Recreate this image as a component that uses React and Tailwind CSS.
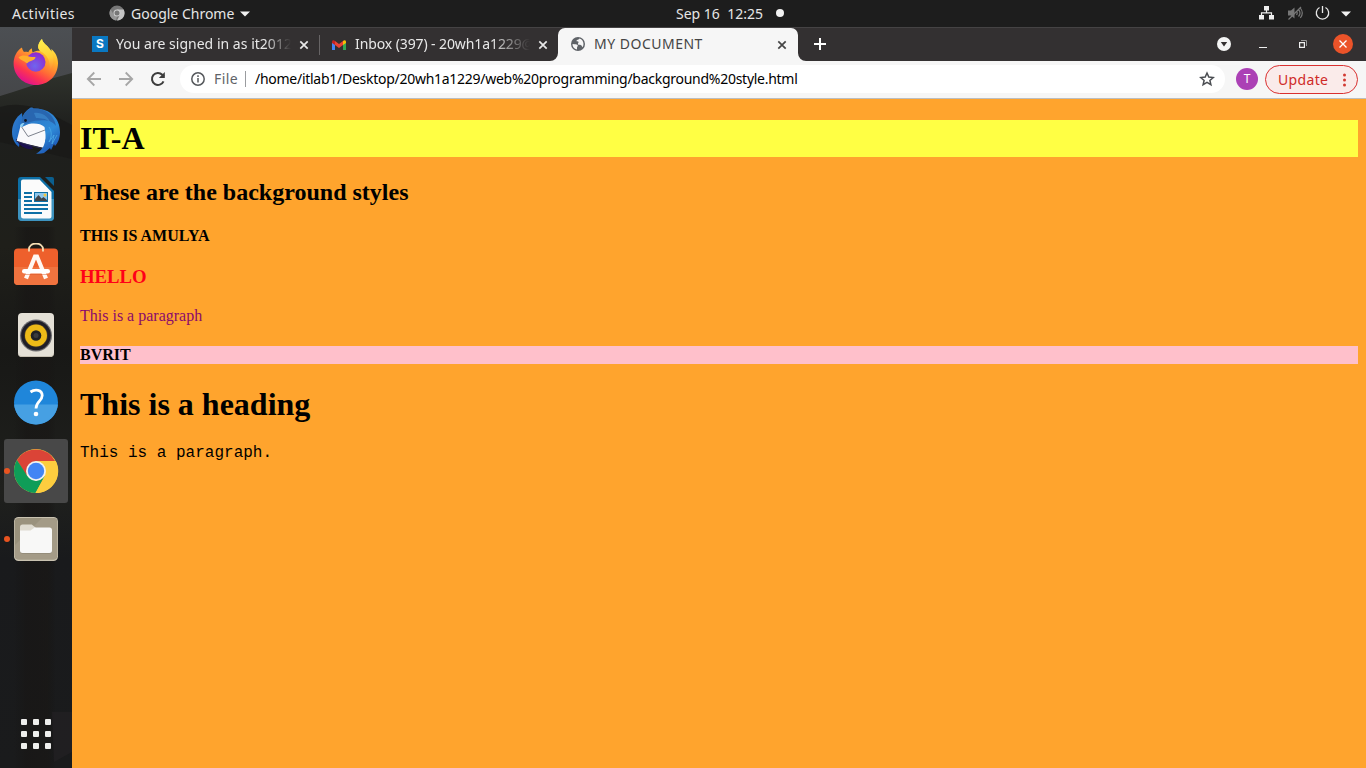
import React from "react";

function Firefox() {
  return (
    <svg viewBox="0 0 48 48" className="size-12">
      <defs>
        <linearGradient id="ffBody" x1="0.85" y1="0.1" x2="0.35" y2="0.97">
          <stop offset="0" stopColor="#fff44f" />
          <stop offset="0.3" stopColor="#ffb52a" />
          <stop offset="0.62" stopColor="#ff6a36" />
          <stop offset="0.8" stopColor="#fd3550" />
          <stop offset="1" stopColor="#e31587" />
        </linearGradient>
        <linearGradient id="ffTail" x1="0.5" y1="0" x2="0.6" y2="1">
          <stop offset="0" stopColor="#fff04e" />
          <stop offset="0.6" stopColor="#ffcf36" />
          <stop offset="1" stopColor="#ff9640" stopOpacity="0.3" />
        </linearGradient>
        <radialGradient id="ffGlobe" cx="0.45" cy="0.7" r="0.65">
          <stop offset="0" stopColor="#6f66ee" />
          <stop offset="1" stopColor="#8f2bd0" />
        </radialGradient>
      </defs>
      <path d="M10 8.500c.3 2 1 3.300 2 4.500 1.500-.3 3-.2 4.300.2C17 11.500 18.500 10 20 9.300c-.2 1.800.2 3.200.8 4.200 2-1.300 5-2 8-1.500C24.500 9.500 26 4 30 0c.6 4 4.800 6 7.300 9.500.8 1 1.500 2 2 3 .2-1 .1-1.800 0-2.500 4 3 6.700 8.500 6.700 14C46 36.500 36.500 46 24 46S1.600 36.500 1.600 24.500C1.600 18.500 4.500 11.500 10 8.500z" fill="url(#ffBody)" />
      <path d="M30 0c.6 4 4.800 6 7.300 9.500 5 6.500 6 15 .5 21.500 1-9-3-15.500-9-18.500C24.500 9.500 26 4 30 0z" fill="url(#ffTail)" />
      <circle cx="23.800" cy="23" r="9.700" fill="url(#ffGlobe)" />
      <path d="M6.500 18.500c2.500-2.500 7-2.300 9.500-1.300 2.500.8 5 .8 7.500.8.2 2-2.200 3.200-4.600 4-1.800.6-2.900 1.500-3.900 2.400C12 22 8.500 21 6.500 18.500z" fill="#ffae2c" />
    </svg>
  );
}

function Thunderbird() {
  return (
    <svg viewBox="0 0 48 48" className="size-12">
      <defs>
        <linearGradient id="tbBody" x1="0" y1="0" x2="1" y2="1">
          <stop offset="0" stopColor="#3b80cc" />
          <stop offset="0.5" stopColor="#2371c8" />
          <stop offset="1" stopColor="#1a52b5" />
        </linearGradient>
        <linearGradient id="tbWing" x1="0.2" y1="0" x2="0.8" y2="1">
          <stop offset="0" stopColor="#2a73c4" />
          <stop offset="0.6" stopColor="#2f8bd8" />
          <stop offset="1" stopColor="#1b50b0" />
        </linearGradient>
      </defs>
      <path d="M10 6C4 10 0 17 0 25c0 7 3 12 7 15l4-24z" fill="url(#tbBody)" />
      <path d="M4 32c3 7 10 11 17 10l-4-8z" fill="#1b1050" />
      <path d="M9 17l4-2h22v12l-3 14L4.500 34.500z" fill="#f9f9fb" />
      <path d="M9 19l7 10.500L33 23" fill="none" stroke="#7d828d" strokeWidth="1" />
      <path d="M4 34l14 4.500 13 3" fill="none" stroke="#2b2b50" strokeWidth="1" />
      <path d="M18 1c2-1 3.500 0 3.500 1C36 .500 48 10 48 25c0 6-2 11-5 14l-1-2-3 6-1-2-6 5c-1 .5-4 .8-8 .8C31 43 33 37 33.500 31c.3-4-.5-8-1-11-3-3-8-4-13-3.500-4 .5-6.500 2-9.500 3.500C7 18 9.500 6 18 1z" fill="url(#tbWing)" />
      <path d="M18 1.500C31 0 42 7 44 19c-5-6-11-6-16-5.500-7 0-13 2-18 5C8 15 11 5 18 1.500z" fill="#2866b0" />
      <path d="M22 6c7-1 14 3 16 9-5-4-9-3.500-14-4" fill="#3f8dd2" opacity=".6" />
      <path d="M37 20c3 5 3 9 0 15l5-7-2 9 5-9" fill="none" stroke="#4fb0e8" strokeWidth="1" opacity=".7" />
      <path d="M8 20c0-3 2-4.500 4.500-4l-2.500 4z" fill="#8fd2f4" />
      <circle cx="13.500" cy="13.500" r="1.400" fill="#10151f" />
    </svg>
  );
}

function Writer() {
  return (
    <svg viewBox="0 0 48 48" className="size-12">
      <path d="M9 2h19l14 14v26a4 4 0 0 1-4 4H10a4 4 0 0 1-4-4V5a3 3 0 0 1 3-3z" fill="#0d6fa6" />
      <path d="M6 24h36v18a4 4 0 0 1-4 4H10a4 4 0 0 1-4-4z" fill="#3d93bf" />
      <path d="M33 2h7a2 2 0 0 1 2 2v7z" fill="#0b5f8f" />
      <path d="M11 4.500h16.500L39.500 17v24.500a2 2 0 0 1-2 2h-26a2.500 2.500 0 0 1-2.500-2.500V6.500a2 2 0 0 1 2-2z" fill="#fbfbfb" />
      <path d="M12 18h8M12 22h8M12 26h8M12 30h24M12 34h24M12 38h18" stroke="#0d6fa6" strokeWidth="2" />
      <path d="M22 17h14v10H22z" fill="#0d6fa6" />
      <path d="M23 18h12v8H23z" fill="#8fc6ec" />
      <circle cx="33" cy="20" r="1.500" fill="#f3c53d" />
      <path d="M23 26v-2l3.500-4 3 3.500 2-1.500 3.500 3v1z" fill="#414449" />
    </svg>
  );
}

function Software() {
  return (
    <svg viewBox="0 0 48 48" className="size-12">
      <rect x="2" y="5.500" width="44" height="36.500" rx="4" fill="#ee602c" />
      <path d="M2 24h44v14a4 4 0 0 1-4 4H6a4 4 0 0 1-4-4z" fill="#f0733f" />
      <path d="M17 8.500V6a7 5.500 0 0 1 14 0v2.500" fill="none" stroke="#f6dfb5" strokeWidth="1.800" />
      <path d="M14 35.500L23 13.500h2l9 22" fill="none" stroke="#fff8f3" strokeWidth="4.200" />
      <rect x="10" y="26" width="28" height="4.600" rx="2.300" fill="#fff" />
      <path d="M13 31.500h22" stroke="#d65527" strokeWidth="1" opacity=".45" />
    </svg>
  );
}

function Rhythmbox() {
  return (
    <svg viewBox="0 0 48 48" className="size-12">
      <rect x="6" y="2" width="36" height="44" rx="4" fill="#e4e0d6" />
      <path d="M6 41a4 4 0 0 0 4 5h28a4 4 0 0 0 4-5v1a4 4 0 0 1-4 3H10a4 4 0 0 1-4-3z" fill="#c6c0b2" />
      <circle cx="24" cy="24.500" r="16" fill="#6c6b6e" />
      <circle cx="24" cy="24.500" r="14.800" fill="#1f1e28" />
      <circle cx="24" cy="24.500" r="11.700" fill="#4a3d25" />
      <circle cx="24" cy="24.500" r="11" fill="#edba18" />
      <circle cx="24" cy="24.500" r="5.300" fill="#202224" />
      <circle cx="24" cy="24.500" r="2.500" fill="#3a3c3e" />
    </svg>
  );
}

function Help() {
  return (
    <svg viewBox="0 0 48 48" className="size-12">
      <circle cx="24" cy="23.500" r="22" fill="#1f86da" />
      <path d="M2.100 25.500h43.800a22 22 0 0 1-43.800 0z" fill="#46a0e3" />
      <path d="M18.500 13c2.500-1.800 5-2.200 7.500-1.700 3 .7 4.200 2.700 4.200 5.200 0 5.500-6.200 6-6.200 13" fill="none" stroke="#fff" strokeWidth="2.800" />
      <circle cx="24" cy="35" r="2.300" fill="#fff" />
    </svg>
  );
}

function Chrome() {
  return (
    <svg viewBox="0 0 48 48" className="size-12">
      <circle cx="24" cy="24" r="22" fill="#fdcd3f" />
      <path d="M4.950 13A22 22 0 0 1 43.050 14H24L14.500 29.500z" fill="#db4437" />
      <path d="M4.950 13A22 22 0 0 0 23.500 46L32.700 29 24 34 15.300 29z" fill="#0f9d58" />
      <path d="M24 14h19.800A22 22 0 0 1 23.500 46L33 29z" fill="#fdcd3f" />
      <circle cx="24" cy="24" r="10" fill="#f1f1f1" />
      <circle cx="24" cy="24" r="8.200" fill="#4285f4" />
    </svg>
  );
}

function Files() {
  return (
    <svg viewBox="0 0 48 48" className="size-12">
      <rect x="2" y="2" width="44" height="44" rx="4.500" fill="#c9c2b0" />
      <rect x="2.700" y="3" width="42.600" height="41.500" rx="4" fill="#9a927d" />
      <path d="M3 30L30 3h11a4 4 0 0 1 4 4v34a3.500 3.500 0 0 1-4 3.500H7a4 4 0 0 1-4-3.500z" fill="#a8a08c" opacity=".7" />
      <path d="M8 17v-5a2.500 2.500 0 0 1 2.500-2.500h9.300L24 13l-3 4z" fill="#dfdbd0" />
      <path d="M8 16.500h10.500l4-3.500H37.500a2.500 2.500 0 0 1 2.500 2.500V36a2.500 2.500 0 0 1-2.500 2.500h-27A2.500 2.500 0 0 1 8 36z" fill="#777060" opacity=".6" />
      <path d="M8 15.500h10.500l4-3H37.500A2.500 2.500 0 0 1 40 15v20.500a2.500 2.500 0 0 1-2.500 2.500h-27A2.500 2.500 0 0 1 8 35.500z" fill="#f8f8f7" />
    </svg>
  );
}

function CloseX({ className = "" }) {
  return (
    <svg viewBox="0 0 10 10" className={`size-[10px] shrink-0 ${className}`}>
      <path d="M1.300 1.300l7.400 7.400M8.700 1.300L1.300 8.700" stroke="currentColor" strokeWidth="1.700" />
    </svg>
  );
}

function TopBar() {
  return (
    <header className="flex h-[27px] shrink-0 items-center bg-[#1d1d1d] font-['Noto_Sans',sans-serif] text-[14px] leading-[27px] text-[#e6e6e6]">
      <div className="flex w-[676px] items-center pl-3">
        <span className="w-[97px] tracking-[0.47px] whitespace-nowrap">Activities</span>
        <svg viewBox="0 0 16 16" className="-mt-px size-4">
          <circle cx="8" cy="8" r="7.500" fill="#777" />
          <path d="M8 4.500h6.700A7.500 7.500 0 0 1 8 15.500L11 9.800z" fill="#c4c4c4" />
          <path d="M1.500 4.200L4.900 10 8 11.500 7 15.400A7.500 7.500 0 0 1 1.500 4.200z" fill="#969696" />
          <circle cx="8" cy="8" r="3.500" fill="#d0d0d0" />
          <circle cx="8" cy="8" r="2.500" fill="#777" />
        </svg>
        <span className="ml-[6px] w-[109px] whitespace-nowrap">Google Chrome</span>
        <svg viewBox="0 0 10 6" className="h-[6px] w-[10px]"><path d="M0 .500h10L5 5.500z" fill="#f2f2f2" /></svg>
      </div>
      <span className="-mt-px w-[100px] whitespace-pre">Sep 16  12:25</span>
      <span className="-mt-px size-2 rounded-full bg-[#f2f2f2]" />
      <div className="ml-auto flex items-center pr-[15px]">
        <svg viewBox="0 0 16 14" className="-mt-px h-[14px] w-4" fill="#eee">
          <path d="M6 0h5v4.500H6zM1 9h5v4.500H1zM11 9h5v4.500h-5z" />
          <path d="M8.500 4v3M3.500 10V6.800h10V10" fill="none" stroke="#eee" strokeWidth="1.200" />
        </svg>
        <svg viewBox="0 0 16 16" className="-mt-px ml-[13px] size-4" fill="none" stroke="#777" strokeWidth="1.200">
          <path d="M1 5.500h3l3.500-3v11L4 10.500H1z" fill="#777" stroke="none" />
          <path d="M9.500 6q1.500 2 0 4M11.500 4.500q3 3.500 0 7M13.300 3q4 5 0 10M1.500 14.500L14 2" />
        </svg>
        <svg viewBox="0 0 16 16" className="-mt-px ml-[11px] size-4" fill="none" stroke="#e8e8e8" strokeWidth="1.300">
          <path d="M5.500 2.500a6.200 6.200 0 1 0 6 0M8.500 1v7" />
        </svg>
        <svg viewBox="0 0 10 6" className="ml-[11px] h-[6px] w-[10px]"><path d="M0 .500h10L5 5.500z" fill="#f2f2f2" /></svg>
      </div>
    </header>
  );
}

const dockApps = [
  { id: "firefox", Icon: Firefox },
  { id: "thunderbird", Icon: Thunderbird },
  { id: "writer", Icon: Writer },
  { id: "software", Icon: Software },
  { id: "rhythmbox", Icon: Rhythmbox },
  { id: "help", Icon: Help },
  { id: "chrome", Icon: Chrome, running: true, active: true },
  { id: "files", Icon: Files, running: true },
];

function Dock() {
  return (
    <nav className="relative flex w-[72px] shrink-0 flex-col items-center overflow-hidden bg-[#191919] pt-1 pb-[19px]">
      <svg viewBox="0 0 72 741" preserveAspectRatio="none" className="absolute inset-0 h-full w-full">
        <defs>
          <linearGradient id="sky" x1="0" y1="0" x2="0" y2="1">
            <stop offset="0" stopColor="#4c4f53" />
            <stop offset="1" stopColor="#434446" />
          </linearGradient>
          <linearGradient id="ground" x1="0" y1="0" x2="0" y2="1">
            <stop offset="0" stopColor="#2f322c" />
            <stop offset="0.08" stopColor="#1e1f1d" />
            <stop offset="0.25" stopColor="#1f1f1a" />
            <stop offset="0.4" stopColor="#181816" />
            <stop offset="0.6" stopColor="#1f201d" />
            <stop offset="0.7" stopColor="#191a1c" />
            <stop offset="1" stopColor="#1a1b1c" />
          </linearGradient>
          <linearGradient id="trunk" x1="0" y1="0" x2="1" y2="0">
            <stop offset="0" stopColor="#161514" stopOpacity="0" />
            <stop offset="0.3" stopColor="#181615" stopOpacity=".7" />
            <stop offset="0.8" stopColor="#191715" stopOpacity=".7" />
            <stop offset="1" stopColor="#161514" stopOpacity="0" />
          </linearGradient>
        </defs>
        <path d="M0 0h72v90H0z" fill="url(#sky)" />
        <path d="M0 69Q30 60 50 52L72 46V741H0z" fill="url(#ground)" />
        <path d="M0 80q20-6 45 4l27 14v34L0 115z" fill="#181817" opacity=".7" />
        <path d="M14 200h42v541H14z" fill="url(#trunk)" />
        <path d="M52 685h20v40l-18 10z" fill="#242124" opacity=".7" />
      </svg>
      <div className="relative flex flex-col gap-1">
        {dockApps.map(({ id, Icon, running, active }) => (
          <div key={id} className={`relative flex size-16 items-center justify-center rounded-[3px] ${active ? "bg-[#484848]" : ""}`}>
            {running && <span className="absolute top-[29px] left-0 size-[6px] rounded-full bg-[#e95420]" />}
            <Icon />
          </div>
        ))}
      </div>
      <div className="relative mt-auto grid grid-cols-3 gap-[6px]">
        {Array.from({ length: 9 }, (_, i) => (
          <span key={i} className="size-[6px] rounded-[1px] bg-[#eeeeec]" />
        ))}
      </div>
    </nav>
  );
}

function TabStrip() {
  return (
    <div className="flex h-[34px] shrink-0 border-t border-[#454344] bg-[#333031] pl-2 text-[14px] text-[#e8e8e8]">
      <div className="flex w-[239px] items-center pl-3">
        <span className="-mt-px flex size-4 shrink-0 items-center justify-center bg-[#0a78c2] font-['Inter',sans-serif] text-[12px] leading-4 font-bold text-white">S</span>
        <span className="ml-2 w-[175px] mask-r-from-[85%] pb-[2px] tracking-[0.02px] whitespace-nowrap">You are signed in as it2012</span>
        <CloseX className="ml-2" />
      </div>
      <div className="flex w-[239px] items-center">
        <span className="h-5 w-px bg-[#676465]" />
        <svg viewBox="0 0 16 12" className="ml-[11px] h-3 w-4 shrink-0">
          <path d="M1 3v8h3V5z" fill="#4285f4" />
          <path d="M12 5v6h3V3z" fill="#34a853" />
          <path d="M4 2l4 3 4-3v4L8 9 4 6z" fill="#ea4335" />
          <path d="M1 3c0-2 1.800-2.300 3-1v4L1 4z" fill="#c5221f" />
          <path d="M15 3c0-2-1.800-2.300-3-1v4l3-2z" fill="#fbbc04" />
        </svg>
        <span className="ml-2 w-[175px] mask-r-from-[78%] pb-[2px] tracking-[-0.1px] whitespace-nowrap">Inbox (397) - 20wh1a1229@</span>
        <CloseX className="ml-2" />
      </div>
      <div className="relative flex w-60 items-center rounded-t-[7px] bg-[#f6f6f6] pl-3 text-[#454545]">
        <svg viewBox="0 0 8 8" className="absolute bottom-0 -left-2 size-2"><path d="M8 0v8H0a8 8 0 0 0 8-8z" fill="#f6f6f6" /></svg>
        <svg viewBox="0 0 8 8" className="absolute -right-2 bottom-0 size-2"><path d="M0 0v8h8a8 8 0 0 1-8-8z" fill="#f6f6f6" /></svg>
        <svg viewBox="0 0 16 16" className="-mt-px size-4 shrink-0">
          <circle cx="8" cy="8" r="7" fill="#5f6368" />
          <path d="M2.500 8l2 .2c1.500 0 3 0 3.300 1.200.2 1-.8 1.200-.8 2.200v1.800C4 13 2.300 10.500 2.500 8zM9.500 2.600c2.500.8 4 3 4 5.400 0 1.300-.3 2.300-1 3.200-.6-.5-.5-1.600-1.300-2-.8-.5-2.200.2-3-.8-.8-1.200.8-2 .3-2.700-.5-.6-2.200.2-2-1C6.700 3.500 9 4 9.500 2.600z" fill="#f6f6f6" />
        </svg>
        <span className="ml-2 w-[183px] pb-[2px] tracking-[0.5px] whitespace-nowrap">MY DOCUMENT</span>
        <CloseX />
      </div>
      <svg viewBox="0 0 12 12" className="mt-[10px] ml-4 size-3"><path d="M6 0v12M0 6h12" stroke="#fff" strokeWidth="2" /></svg>
      <div className="ml-auto flex items-center pr-[13px] pb-px">
        <svg viewBox="0 0 14 14" className="size-[14px]"><circle cx="7" cy="7" r="7" fill="#f5f5f5" /><path d="M3.800 5h6.400L7 9.500z" fill="#333031" /></svg>
        <span className="mt-[6px] ml-7 h-px w-2 bg-[#eee]" />
        <svg viewBox="0 0 8 8" className="ml-8 size-2" fill="none"><path d="M.600 2.600h4.800v4.800H.600z" stroke="#eee" strokeWidth="1.200" /><path d="M2 .500h5.500V6" stroke="#999" /></svg>
        <span className="ml-[26px] flex size-5 items-center justify-center rounded-full bg-[#eb5329]">
          <svg viewBox="0 0 8 8" className="size-2"><path d="M.500.500l7 7M7.500.500l-7 7" stroke="#fff" strokeWidth="1.300" /></svg>
        </span>
      </div>
    </div>
  );
}

function Toolbar() {
  return (
    <div className="flex h-[38px] shrink-0 items-start border-b border-[#bdbdbd] bg-[#f6f6f6] pt-1 pr-2 pl-[14px] text-[14px]">
      <div className="flex h-7 items-center gap-4">
        <svg viewBox="0 0 16 16" className="size-4" fill="none" stroke="#a6a6a6" strokeWidth="1.800"><path d="M15 8H2M8.300 1.500L1.800 8l6.500 6.500" /></svg>
        <svg viewBox="0 0 16 16" className="size-4" fill="none" stroke="#a6a6a6" strokeWidth="1.800"><path d="M1 8h13M7.700 1.500L14.200 8l-6.500 6.500" /></svg>
        <svg viewBox="0 0 16 16" className="size-4" fill="none" stroke="#3c3c3c" strokeWidth="2"><path d="M13.500 10.300A6 6 0 1 1 12.300 3.800L14 5.500" /><path d="M14.800 1v6H8.800z" fill="#3c3c3c" stroke="none" /></svg>
      </div>
      <div className="ml-[14px] flex h-7 w-[1045px] items-center rounded-full bg-white pl-[11px]">
        <svg viewBox="0 0 14 14" className="size-[14px]" fill="none" stroke="#55585c" strokeWidth="1.500"><circle cx="7" cy="7" r="6.200" /><path d="M7 6v4.500M7 3.300v1.600" /></svg>
        <span className="ml-[9px] w-[31px] pb-[2px] tracking-[0.45px] text-[#5f6368]">File</span>
        <span className="h-4 w-px bg-[#9a9c9f]" />
        <span className="ml-[9px] pb-[2px] tracking-[-0.27px] whitespace-nowrap text-black">/home/itlab1/Desktop/20wh1a1229/web%20programming/background%20style.html</span>
        <svg viewBox="0 0 16 16" className="mr-[10px] ml-auto size-4" fill="none" stroke="#4b4e52" strokeWidth="1.500"><path d="M8 2l1.800 4.100 4.400.4-3.300 2.900 1 4.300L8 11.400l-3.900 2.300 1-4.300L1.800 6.500l4.400-.4z" /></svg>
      </div>
      <span className="mt-[3px] ml-[11px] flex size-[22px] items-center justify-center rounded-full bg-[#ab40b5] text-[12px] text-white">T</span>
      <div className="ml-[7px] flex h-[29px] w-[93px] items-center rounded-full border border-[#d93030] bg-[#faebea] pl-3 text-[14px] text-[#cf2a27]">
        <span className="w-[65px] tracking-[0.35px]">Update</span>
        <svg viewBox="0 0 4 14" className="h-[14px] w-1" fill="#d23a33"><circle cx="1.500" cy="2" r="1.500" /><circle cx="1.500" cy="7" r="1.500" /><circle cx="1.500" cy="12" r="1.500" /></svg>
      </div>
    </div>
  );
}

function Document() {
  return (
    <main className="flex flex-1 flex-col bg-[#ffa42d] px-2 pt-[21.44px] font-['Liberation_Serif',serif] text-[16px] leading-[normal] text-black">
      <h1 className="bg-[#ffff44] text-[32px] font-bold">IT-A</h1>
      <h2 className="mt-[21.44px] text-[24px] font-bold">These are the background styles</h2>
      <h4 className="mt-[21.28px] font-bold">THIS IS AMULYA</h4>
      <h3 className="mt-[21.28px] text-[18.72px] font-bold text-[#ff0018]">HELLO</h3>
      <p className="mt-[18.72px] text-[#8b0a6b]">This is a paragraph</p>
      <h4 className="mt-[21.28px] bg-[#ffc0cb] font-bold">BVRIT</h4>
      <h1 className="mt-[21.44px] text-[32px] font-bold">This is a heading</h1>
      <p className="mt-[21.44px] font-['Liberation_Mono',monospace]">This is a paragraph.</p>
    </main>
  );
}

export default function App() {
  return (
    <div className="flex h-[768px] w-[1366px] flex-col overflow-hidden">
      <TopBar />
      <div className="flex min-h-0 flex-1">
        <Dock />
        <div className="flex min-w-0 flex-1 flex-col font-['Noto_Sans',sans-serif]">
          <TabStrip />
          <Toolbar />
          <Document />
        </div>
      </div>
    </div>
  );
}
